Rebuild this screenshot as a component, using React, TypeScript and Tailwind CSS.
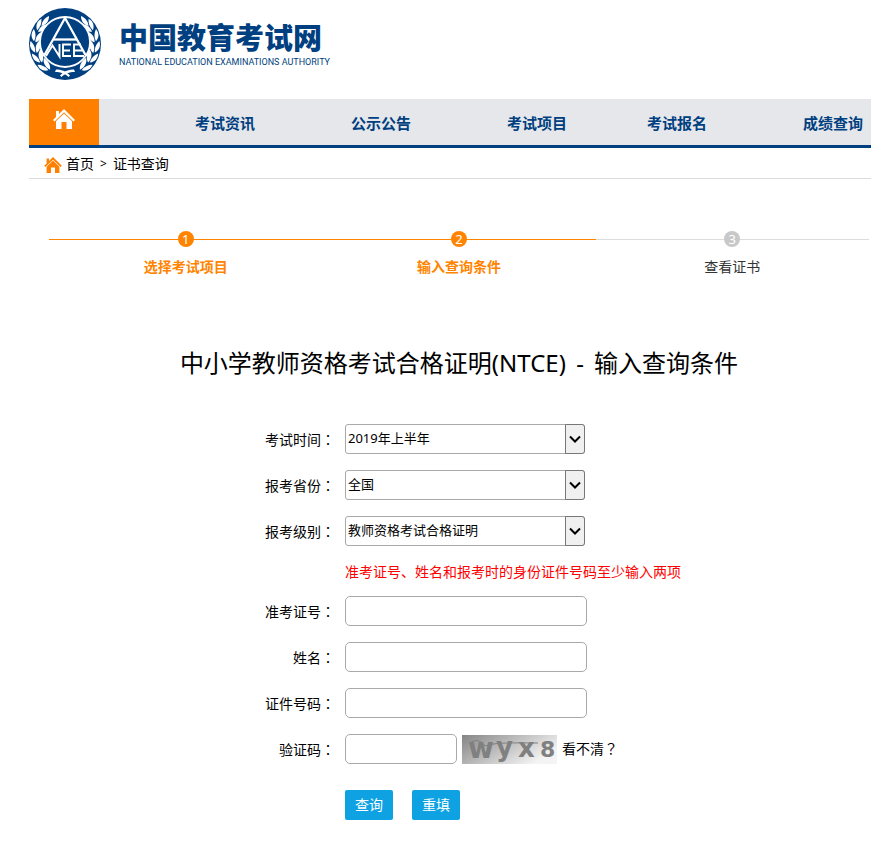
import type { ReactNode } from "react";
import { useState } from "react";

const navItems = [
  { label: "考试资讯", className: "ml-24" },
  { label: "公示公告", className: "ml-24" },
  { label: "考试项目", className: "ml-24" },
  { label: "考试报名", className: "ml-20" },
  { label: "成绩查询", className: "ml-24" },
];

const steps = [
  { title: "选择考试项目", active: true },
  { title: "输入查询条件", active: true },
  { title: "查看证书", active: false },
];

const LEAVES = [-54, -33, -12, 9, 30];

function Emblem() {
  return (
    <svg viewBox="0 0 72 72" className="h-[72px] w-[72px] shrink-0" role="img" aria-label="NEEA">
      <circle cx="36" cy="36" r="36" fill="#003f80" />
      {/* laurel branches */}
      {[1, -1].map((side) => (
        <g key={side} transform={side === 1 ? undefined : "translate(72 0) scale(-1 1)"} fill="#fff">
          {LEAVES.map((angle) => (
            <g key={angle} transform={`rotate(${angle} 36 36)`}>
              <path d="M5 38C1 35 0.500 30 3 26C5.500 29.500 6.500 34 5 38Z" />
              <path d="M6.500 39C5.500 34 7.500 29 12.500 27C12.500 32 11 36.500 6.500 39Z" />
            </g>
          ))}
          <path d="M12.500 18C13 13 15.500 10 20 8C20 12.500 18 16.500 12.500 18Z" />
          <path d="M27 61.500C32 61.500 37 63 41 67.500L39.500 69C36 65.500 32 64 26 64Z" />
        </g>
      ))}
      <circle cx="36" cy="34" r="25" fill="#003f80" stroke="#fff" strokeWidth="1.800" />
      <g fill="none" stroke="#fff" strokeWidth="2.300">
        <path d="M15.500 47L36 10L56.500 47" />
        <path d="M24.500 31.500H47.500" />
      </g>
      <g fill="none" stroke="#fff" strokeWidth="1.900">
        <path d="M17 48L23.500 37.500L30.500 48.500V36" />
        <path d="M42 36.500H34V48H42M34 42.500H41" />
        <path d="M52 36.500H45V48H55M45 42.500H53" />
      </g>
    </svg>
  );
}

function HomeIcon({ className }: { className: string }) {
  return (
    <svg viewBox="0 0 22 20" className={className} fill="currentColor" aria-hidden="true">
      <path d="M11 0L14.500 3.500L22 11L20.500 12.500L11 3.300L1.500 12.500L0 11L3 8V2H6V5Z" />
      <path d="M11 4.500L19 12.200V20H13.500V13H8.500V20H3V12.200Z" />
    </svg>
  );
}

function Captcha() {
  return (
    <svg viewBox="0 0 95 29" className="ml-[5px] h-[29px] w-[95px] overflow-visible" role="img" aria-label="验证码图片">
      <defs>
        <linearGradient id="captcha-bg" x1="0" y1="0" x2="1" y2="0.500">
          <stop offset="0" stopColor="#858585" />
          <stop offset="1" stopColor="#f4f4f4" />
        </linearGradient>
      </defs>
      <rect width="95" height="29" fill="url(#captcha-bg)" />
      <g fill="#808080" fontFamily="DejaVu Sans" fontWeight="700">
        <text x="6" y="23" fontSize="28">w</text>
        <text x="34" y="21" fontSize="26">y</text>
        <text x="56" y="22" fontSize="26">x</text>
        <text x="78" y="22" fontSize="22">8</text>
      </g>
      <path d="M8 8C13 4 19 5 23 11C34 7 52 8 76 8" fill="none" stroke="#808080" />
    </svg>
  );
}

function Row({ id, label, children }: { id: string; label: string; children: ReactNode }) {
  return (
    <div className="flex items-center gap-2.5">
      <label htmlFor={id} className="w-[100px] shrink-0 pt-0.5 text-right">
        {label}
        <span lang="zh-Hant" className="font-['Noto_Sans_CJK_TC',sans-serif] leading-none">：</span>
      </label>
      {children}
    </div>
  );
}

function SelectRow({ id, label, option }: { id: string; label: string; option: string }) {
  return (
    <Row id={id} label={label}>
      <div className="relative">
        <select
          id={id}
          className="block h-[30px] w-60 appearance-none rounded-[3px] border border-[#a9a9a9] bg-white pb-0.5 pl-0.5 text-[13px]"
        >
          <option>{option}</option>
        </select>
        <span className="pointer-events-none absolute inset-y-0 right-0 flex w-5 items-center justify-center rounded-r-[3px] border border-[#777] bg-[#f0f0f0]">
          <svg viewBox="0 0 12 8" className="h-2 w-3" fill="none" stroke="#000" strokeWidth="2">
            <path d="M1 1.500L6 6.500L11 1.500" />
          </svg>
        </span>
      </div>
    </Row>
  );
}

export default function App() {
  const [values, setValues] = useState({ ticket: "", name: "", idNumber: "", code: "" });

  const update = (key: string, value: string) => setValues((prev) => ({ ...prev, [key]: value }));

  const inputClass = "h-[30px] rounded-[5px] border border-[#a9a9a9] bg-white px-2 outline-none";
  const buttonClass = "h-[30px] w-12 rounded-[2px] bg-[#0ea2e3] text-white";

  return (
    <div className="overflow-x-hidden bg-white pb-10 pl-[29px] font-['Noto_Sans','Noto_Sans_CJK_SC',sans-serif] text-[14px] leading-5 text-black">
      <header className="flex items-start gap-[18px] pt-2 text-[#003f80]">
        <Emblem />
        <div className="pt-3">
          <div className="text-[29px] leading-9 font-black whitespace-nowrap">中国教育考试网</div>
          <div className="font-['Roboto',sans-serif] text-[9px] leading-3 whitespace-nowrap">
            NATIONAL EDUCATION EXAMINATIONS AUTHORITY
          </div>
        </div>
      </header>

      <nav className="mt-[19px] flex h-[49px] items-stretch border-b-3 border-[#003f80] bg-[#e6e7eb]">
        <a href="#" aria-label="首页" className="flex w-[70px] shrink-0 justify-center bg-[#ff8000] pt-2.5 text-white">
          <HomeIcon className="h-5 w-[22px]" />
        </a>
        {navItems.map((item) => (
          <a
            key={item.label}
            href="#"
            className={`flex shrink-0 items-center pt-0.5 text-[15px] font-bold whitespace-nowrap text-[#003f80] ${item.className}`}
          >
            {item.label}
          </a>
        ))}
      </nav>

      <div className="flex h-[31px] items-center border-b border-[#dcdcdc] pt-0.5 pl-[15px]">
        <HomeIcon className="mt-0.5 mr-1 h-4 w-[18px] text-[#ff8000]" />
        <a href="#">首页</a>
        <span className="mx-1.5 text-[12px]">&gt;</span>
        <span>证书查询</span>
      </div>

      <main className="pr-0.5 pl-5">
        <ol className="mt-[52px] grid grid-cols-3">
          {steps.map((step, i) => (
            <li key={step.title} className="flex flex-col items-center">
              <div className="relative flex w-full justify-center">
                <span
                  className={`absolute inset-x-0 top-2 border-t ${step.active ? "border-[#ff8400]" : "border-[#dcdcdc]"}`}
                />
                <span
                  className={`relative h-4 w-4 rounded-full text-center text-[13px] leading-4 text-white ${
                    step.active ? "bg-[#ff8400]" : "bg-[#c8c8c8]"
                  }`}
                >
                  {i + 1}
                </span>
              </div>
              <span className={`mt-2.5 ${step.active ? "font-bold text-[#ff8400]" : "text-[#333]"}`}>{step.title}</span>
            </li>
          ))}
        </ol>

        <h1 className="mt-[68px] text-center text-[24px] leading-9">
          中小学教师资格考试合格证明(NTCE)<span className="mx-1"> - </span>输入查询条件
        </h1>

        <form
          className="mx-auto mt-[43px] flex max-w-md flex-col gap-4"
          onSubmit={(e) => e.preventDefault()}
          onReset={() => setValues({ ticket: "", name: "", idNumber: "", code: "" })}
        >
          <SelectRow id="exam-time" label="考试时间" option="2019年上半年" />
          <SelectRow id="province" label="报考省份" option="全国" />
          <SelectRow id="level" label="报考级别" option="教师资格考试合格证明" />
          <p className="-mb-0.5 ml-[110px] whitespace-nowrap text-[#ff0000]">
            准考证号、姓名和报考时的身份证件号码至少输入两项
          </p>
          <Row id="ticket" label="准考证号">
            <input
              id="ticket"
              type="text"
              value={values.ticket}
              onChange={(e) => update("ticket", e.target.value)}
              className={`w-[242px] ${inputClass}`}
            />
          </Row>
          <Row id="name" label="姓名">
            <input
              id="name"
              type="text"
              value={values.name}
              onChange={(e) => update("name", e.target.value)}
              className={`w-[242px] ${inputClass}`}
            />
          </Row>
          <Row id="id-number" label="证件号码">
            <input
              id="id-number"
              type="text"
              value={values.idNumber}
              onChange={(e) => update("idNumber", e.target.value)}
              className={`w-[242px] ${inputClass}`}
            />
          </Row>
          <Row id="code" label="验证码">
            <div className="flex items-center">
              <input
                id="code"
                type="text"
                value={values.code}
                onChange={(e) => update("code", e.target.value)}
                className={`w-28 ${inputClass}`}
              />
              <Captcha />
              <a href="#" className="ml-[5px] whitespace-nowrap">
                看不清<span lang="zh-Hant" className="font-['Noto_Sans_CJK_TC',sans-serif] leading-none">？</span>
              </a>
            </div>
          </Row>
          <div className="mt-2.5 ml-[110px] flex gap-[19px]">
            <button type="submit" className={buttonClass}>
              查询
            </button>
            <button type="reset" className={buttonClass}>
              重填
            </button>
          </div>
        </form>
      </main>
    </div>
  );
}
